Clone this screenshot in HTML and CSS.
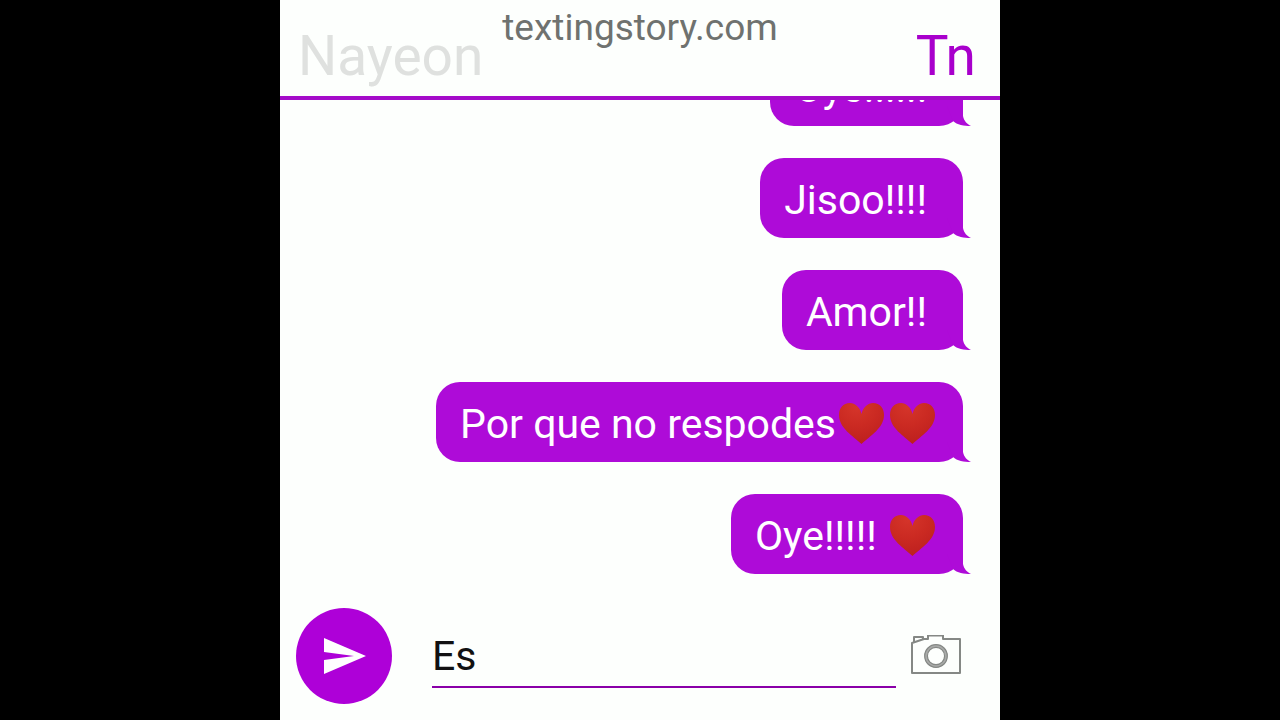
FILE: index.html
```html
<!DOCTYPE html>
<html lang="es">
<head>
<meta charset="UTF-8">
<meta name="viewport" content="width=device-width, initial-scale=1.0">
<title>Texting Story</title>
<link rel="stylesheet" href="styles.css">
</head>
<body>

<!-- shared shapes -->
<svg class="defs" aria-hidden="true">
    <defs>
        <radialGradient id="heartFill" cx="0.4" cy="0.1" r="0.9">
            <stop offset="0" stop-color="#d5352a"/>
            <stop offset="0.5" stop-color="#cb2a22"/>
            <stop offset="1" stop-color="#bd201f"/>
        </radialGradient>
    </defs>
    <symbol id="heart" viewBox="0 0 51 42">
        <path fill="url(#heartFill)" d="M25.5 12C24 5 19 1 14 1C7 1 3 6 3 13C3 26 17 34 25.5 42C34 34 48 26 48 13C48 6 44 1 37 1C32 1 27 5 25.5 12Z"/>
    </symbol>
    <symbol id="tail" viewBox="0 0 24 40">
        <path d="M0 0H16V30C17 35 20 38 24 40C17 40 10 39 6 35L0 20Z"/>
    </symbol>
</svg>

<div class="phone">
    <header>
        <button type="button" class="name">Nayeon</button>
        <span class="site">textingstory.com</span>
        <button type="button" class="name active">Tn</button>
    </header>

    <main class="messages">
        <div class="bubble">Oye!!!!!!<svg class="tail"><use href="#tail"/></svg></div>
        <div class="bubble">Jisoo!!!!<svg class="tail"><use href="#tail"/></svg></div>
        <div class="bubble">Amor!!<svg class="tail"><use href="#tail"/></svg></div>
        <div class="bubble with-hearts">Por que no respodes<svg class="heart" role="img" aria-label="corazón"><use href="#heart"/></svg><svg class="heart" role="img" aria-label="corazón"><use href="#heart"/></svg><svg class="tail"><use href="#tail"/></svg></div>
        <div class="bubble with-hearts">Oye!!!!! <svg class="heart" role="img" aria-label="corazón"><use href="#heart"/></svg><svg class="tail"><use href="#tail"/></svg></div>
    </main>

    <form class="composer">
        <button type="submit" class="send" aria-label="Enviar">
            <svg width="44" height="36" viewBox="0 0 44 36">
                <path fill="#fff" d="M2 0L44 18L2 36V22L32 18L2 14Z"/>
            </svg>
        </button>
        <input type="text" class="message" aria-label="Mensaje" value="Es">
        <button type="button" class="camera" aria-label="Foto">
            <svg width="50" height="40" viewBox="0 0 50 40" fill="none" stroke="#858885" stroke-width="2" stroke-linejoin="round">
                <path d="M1 8L13 4H17V0.5H32V4H49V38H1Z"/>
                <path d="M3 7V2H12V4"/>
                <circle cx="25" cy="21" r="10" stroke="#a9aba9" stroke-width="3"/>
                <circle cx="25" cy="21" r="11.3" stroke-width="1.2"/>
                <circle cx="25" cy="21" r="8.6" stroke-width="1.2"/>
            </svg>
        </button>
    </form>
</div>

</body>
</html>
```

FILE: styles.css
```css
* {
    box-sizing: border-box;
}

body {
    margin: 0;
    background-color: #000;
    font-family: Roboto, sans-serif;
}

button {
    padding: 0;
    border: none;
    background: none;
    font-family: inherit;
    cursor: pointer;
}

.defs {
    position: absolute;
    width: 0;
    height: 0;
}

.phone {
    display: flex;
    flex-direction: column;
    max-width: 720px;
    height: 100vh;
    margin: 0 auto;
    background-color: #fdfffd;
}

header {
    display: flex;
    justify-content: space-between;
    position: relative;
    padding: 24px 24px 8px 18px;
    border-bottom: 4px solid #a40bc9;
}

.name {
    font-size: 55px;
    line-height: 64px;
    color: #dfe1df;
}

.name.active {
    color: #a800cc;
}

/* sits over the header, between the two names */
.site {
    position: absolute;
    top: 7px;
    left: 0;
    right: 0;
    text-align: center;
    font-size: 37px;
    line-height: 42px;
    color: #6f726f;
    pointer-events: none;
}

.messages {
    flex: 1;
    min-height: 0;
    overflow: hidden;
    display: flex;
    flex-direction: column;
    justify-content: flex-end;
    align-items: flex-end;
    gap: 32px;
    padding: 0 37px 18px 16px;
}

.bubble {
    position: relative;
    flex-shrink: 0;
    padding: 18px 36px 14px 24px;
    border-radius: 24px;
    background-color: #ae0bd8;
    color: #fff;
    font-size: 41px;
    line-height: 48px;
}

.bubble.with-hearts {
    padding-right: 25px;
}

.heart {
    width: 51px;
    height: 42px;
    vertical-align: -6px;
}

.tail {
    position: absolute;
    right: -8px;
    bottom: 0;
    width: 24px;
    height: 40px;
    fill: #ae0bd8;
}

.composer {
    display: flex;
    align-items: center;
    padding: 16px;
}

.send {
    display: flex;
    align-items: center;
    justify-content: center;
    width: 96px;
    height: 96px;
    border-radius: 50%;
    background-color: #ae00d8;
}

.message {
    flex: 1;
    min-width: 0;
    height: 64px;
    margin: 0 15px 0 40px;
    padding: 2px 0 0;
    border: none;
    border-bottom: 2px solid #8a00a8;
    outline: none;
    background: none;
    font-family: inherit;
    font-size: 41px;
    color: #111;
}

.camera {
    margin-right: 23px;
}
```
